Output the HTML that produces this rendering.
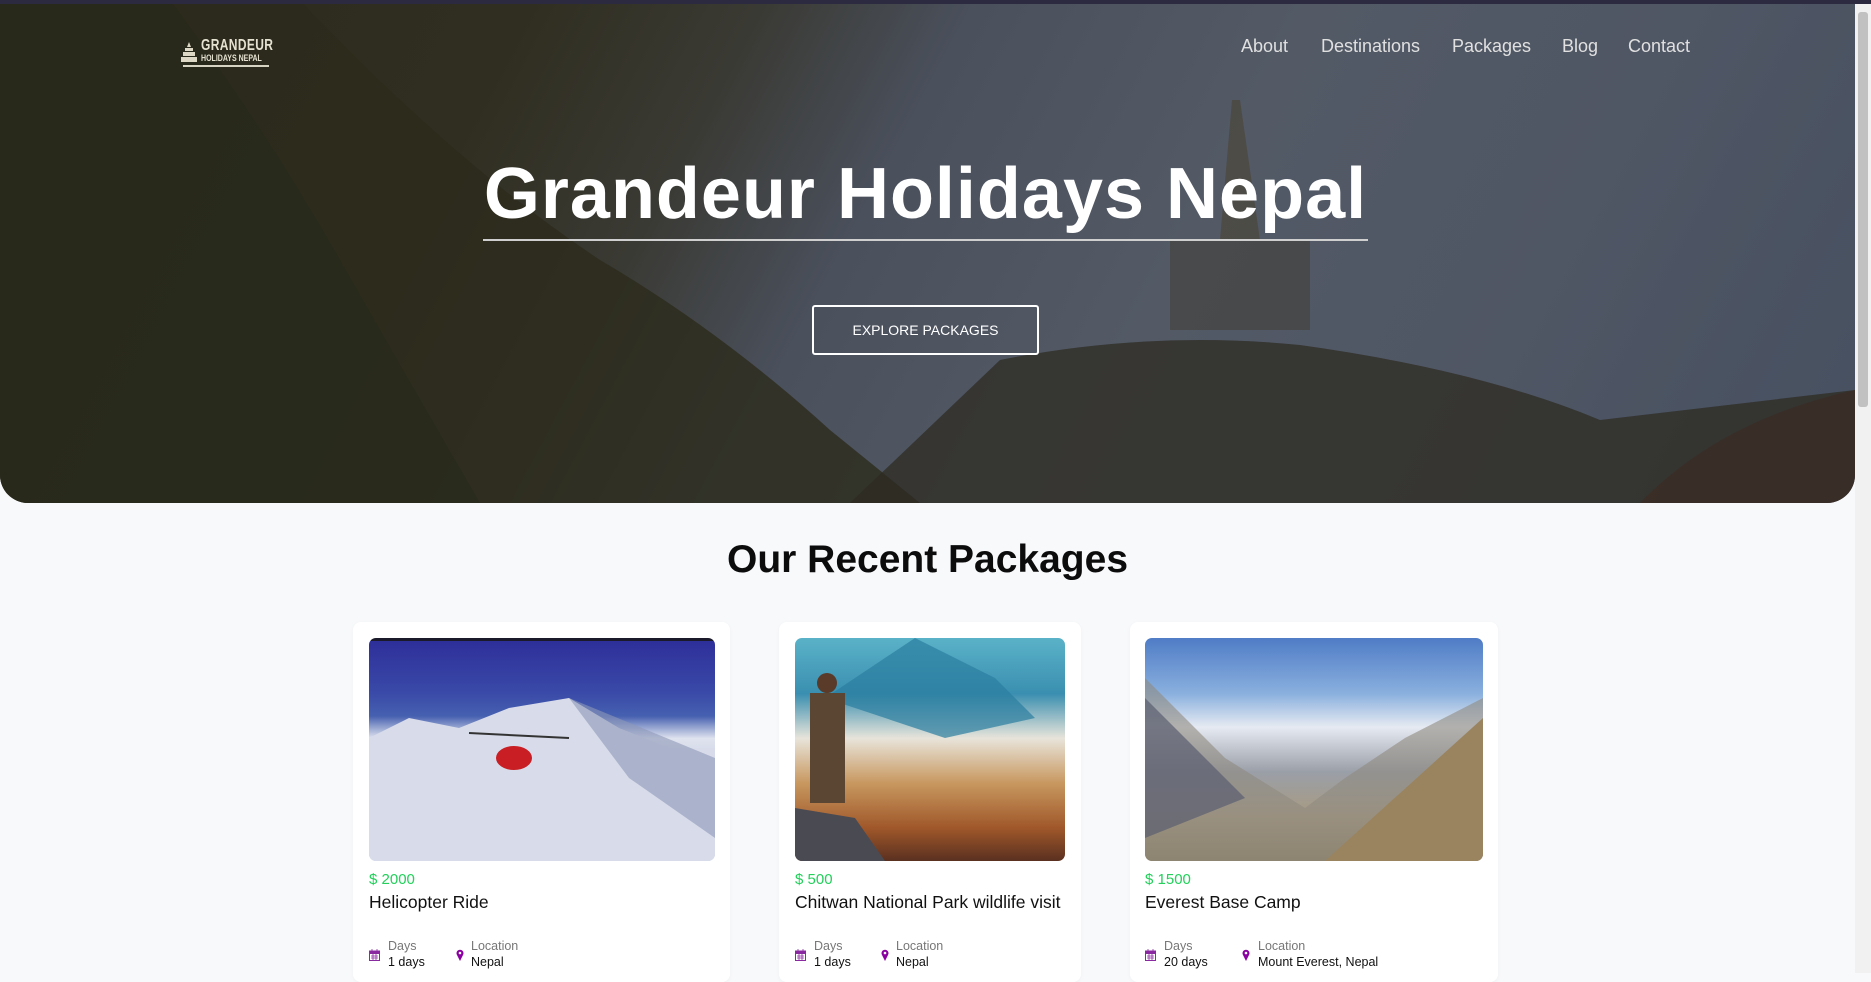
<!DOCTYPE html>
<html><head><meta charset="utf-8"><style>
*{margin:0;padding:0;box-sizing:border-box}
html,body{width:1871px;height:973px;overflow:hidden;background:#f8f9fb;font-family:"Liberation Sans",sans-serif}
.topbar{position:absolute;left:0;top:0;width:1871px;height:4px;background:#2b2a40;z-index:5}
.hero{position:absolute;left:0;top:0;width:1855px;height:503px;border-radius:0 0 28px 28px;overflow:hidden;
background:linear-gradient(118deg,#2a2a1c 0%,#302e20 25%,#3a3a34 36%,#4a505c 46%,#535a66 62%,#4f5664 80%,#465060 100%);}
.hill{position:absolute;left:0;top:0;width:1855px;height:503px}
.scroll{position:absolute;left:1855px;top:0;width:16px;height:973px;background:#f1f1f1}
.thumb{position:absolute;left:1858px;top:12px;width:10px;height:395px;background:#c1c1c1;border-radius:3px}
.logo{position:absolute;left:181px;top:37px;color:#e6e2d2;font-weight:bold}
.logo .a{position:absolute;left:20px;top:0;font-size:16px;letter-spacing:.5px;transform:scaleX(.75);transform-origin:left;white-space:nowrap}
.logo .b{position:absolute;left:20px;top:16px;font-size:9px;white-space:nowrap;transform:scaleX(.78);transform-origin:left}
.logo .l{position:absolute;left:2px;top:28px;width:86px;height:2px;background:#d8d4c4}
nav a{position:absolute;top:36px;color:#e0e0e0;font-size:18px;text-decoration:none}
h1{position:absolute;left:483px;top:153px;width:885px;text-align:center;color:#fff;font-size:72px;font-weight:bold;letter-spacing:1px;white-space:nowrap}
.ul{position:absolute;left:483px;top:239px;width:885px;height:2px;background:#cfcfcf}
.btn{position:absolute;left:812px;top:305px;width:227px;height:50px;border:2px solid #fff;border-radius:3px;color:#fff;font-size:14px;text-align:center;line-height:46px}
h2{position:absolute;left:0;width:1855px;top:538px;text-align:center;font-size:39px;font-weight:bold;color:#0c0c0c}
.card{position:absolute;top:622px;height:360px;background:#fff;border-radius:8px;box-shadow:0 1px 4px rgba(0,0,0,.04)}
.img{position:absolute;height:223px;border-radius:7px;overflow:hidden}
.price{position:absolute;top:871px;color:#22d05a;font-size:15px}
.title{position:absolute;top:892px;color:#111;font-size:17.5px;white-space:nowrap}
.m{position:absolute;top:938px;font-size:12.5px;line-height:16px;color:#777}
.m b{display:block;font-weight:normal;color:#111}
.ic{position:absolute;top:949px}
</style></head><body>
<div class="hero">
<svg class="hill" viewBox="0 0 1855 503">
<path d="M0 0 L300 0 Q450 160 600 260 Q720 330 830 430 L920 503 L0 503Z" fill="#2c2a1c" opacity=".8"/>
<path d="M0 0 L170 0 Q260 120 340 260 Q420 400 480 503 L0 503Z" fill="#26291a" opacity=".6"/>
<path d="M1000 360 Q1150 330 1300 345 Q1480 370 1600 420 L1855 390 L1855 503 L850 503Z" fill="#2e2b22" opacity=".75"/>
<path d="M1220 240 L1232 100 L1240 100 L1260 240Z" fill="#4a4232" opacity=".6"/>
<rect x="1170" y="240" width="140" height="90" fill="#3e3a30" opacity=".5"/>
<path d="M1640 503 Q1720 420 1855 390 L1855 503Z" fill="#3e2a22" opacity=".6"/>
</svg>
</div>
<div class="topbar"></div>
<div class="scroll"></div><div class="thumb"></div>
<div class="logo">
<svg style="position:absolute;left:0;top:5px" width="16" height="22" viewBox="0 0 16 22"><path d="M8 0L10 5H6Z M4 6h8v3H4Z M2 10h12v4H2Z M0 15h16v5H0Z" fill="#ddd8c6"/></svg>
<div class="a">GRANDEUR</div><div class="b">HOLIDAYS NEPAL</div><div class="l"></div></div>
<nav><a style="left:1241px">About</a><a style="left:1321px">Destinations</a><a style="left:1452px">Packages</a><a style="left:1562px">Blog</a><a style="left:1628px">Contact</a></nav>
<h1>Grandeur Holidays Nepal</h1>
<div class="ul"></div>
<div class="btn">EXPLORE PACKAGES</div>
<h2>Our Recent Packages</h2>

<div class="card" style="left:353px;width:377px"></div>
<div class="card" style="left:779px;width:302px"></div>
<div class="card" style="left:1130px;width:368px"></div>

<div class="img" style="left:369px;top:638px;width:346px;background:linear-gradient(180deg,#1a1a2a 0,#1a1a2a 3px,#2e2f9a 3px,#3a4aa8 25%,#4660b0 35%,#dfe3ef 45%,#c9d0e2 60%,#eef0f6 80%,#c5cad8 100%)">
<svg width="346" height="223"><path d="M0 100 L40 80 L90 90 L140 70 L200 60 L250 90 L300 110 L346 110 L346 223 L0 223Z" fill="#d8dcea"/><path d="M200 60 L260 140 L346 200 L346 120Z" fill="#8d98b8" opacity=".6"/><ellipse cx="145" cy="120" rx="18" ry="12" fill="#c81e24"/><path d="M100 95 L200 100" stroke="#333" stroke-width="2"/></svg></div>
<div class="img" style="left:795px;top:638px;width:270px;background:linear-gradient(180deg,#5ab2c8 0%,#3a8fb0 25%,#e8e4da 45%,#c89860 65%,#a0582a 85%,#5a3020 100%)">
<svg width="270" height="223"><path d="M30 60 L120 0 L200 40 L240 80 L150 100Z" fill="#2b7ea0" opacity=".7"/><rect x="15" y="55" width="35" height="110" fill="#5a4632"/><circle cx="32" cy="45" r="10" fill="#5a3a28"/><path d="M0 223 L0 170 L60 180 L90 223Z" fill="#4a4a52"/></svg></div>
<div class="img" style="left:1145px;top:638px;width:338px;background:linear-gradient(180deg,#4f7cc6 0%,#8ab0de 25%,#e6eaf2 40%,#9a9fa8 60%,#a89a80 80%,#8a7a5a 100%)">
<svg width="338" height="223"><path d="M0 40 L80 120 L160 170 L200 140 L260 100 L338 60 L338 223 L0 223Z" fill="#8f8a80" opacity=".6"/><path d="M338 80 L180 223 L338 223Z" fill="#9a8460"/><path d="M0 60 L100 160 L0 200Z" fill="#5a5e70" opacity=".7"/></svg></div>

<div class="price" style="left:369px">$ 2000</div><div class="title" style="left:369px">Helicopter Ride</div>
<div class="price" style="left:795px">$ 500</div><div class="title" style="left:795px">Chitwan National Park wildlife visit</div>
<div class="price" style="left:1145px">$ 1500</div><div class="title" style="left:1145px">Everest Base Camp</div>

<svg class="ic" style="left:369px" width="11" height="12" viewBox="0 0 11 12"><rect x=".5" y="2" width="10" height="9.5" fill="none" stroke="#8a2aa0"/><rect x="0" y="2" width="11" height="3" fill="#8a2aa0"/><path d="M3 0v3M8 0v3M2 7h7M2 9h7M4 5v6M7 5v6" stroke="#8a2aa0" stroke-width=".8"/></svg>
<div class="m" style="left:388px">Days<b>1 days</b></div>
<svg class="ic" style="left:456px" width="8" height="12" viewBox="0 0 8 12"><path d="M4 12L1 6A3.5 3.5 0 1 1 7 6Z" fill="#8a00a0"/><circle cx="4" cy="4" r="1.3" fill="#fff"/></svg>
<div class="m" style="left:471px">Location<b>Nepal</b></div>

<svg class="ic" style="left:795px" width="11" height="12" viewBox="0 0 11 12"><rect x=".5" y="2" width="10" height="9.5" fill="none" stroke="#8a2aa0"/><rect x="0" y="2" width="11" height="3" fill="#8a2aa0"/><path d="M3 0v3M8 0v3M2 7h7M2 9h7M4 5v6M7 5v6" stroke="#8a2aa0" stroke-width=".8"/></svg>
<div class="m" style="left:814px">Days<b>1 days</b></div>
<svg class="ic" style="left:881px" width="8" height="12" viewBox="0 0 8 12"><path d="M4 12L1 6A3.5 3.5 0 1 1 7 6Z" fill="#8a00a0"/><circle cx="4" cy="4" r="1.3" fill="#fff"/></svg>
<div class="m" style="left:896px">Location<b>Nepal</b></div>

<svg class="ic" style="left:1145px" width="11" height="12" viewBox="0 0 11 12"><rect x=".5" y="2" width="10" height="9.5" fill="none" stroke="#8a2aa0"/><rect x="0" y="2" width="11" height="3" fill="#8a2aa0"/><path d="M3 0v3M8 0v3M2 7h7M2 9h7M4 5v6M7 5v6" stroke="#8a2aa0" stroke-width=".8"/></svg>
<div class="m" style="left:1164px">Days<b>20 days</b></div>
<svg class="ic" style="left:1242px" width="8" height="12" viewBox="0 0 8 12"><path d="M4 12L1 6A3.5 3.5 0 1 1 7 6Z" fill="#8a00a0"/><circle cx="4" cy="4" r="1.3" fill="#fff"/></svg>
<div class="m" style="left:1258px">Location<b>Mount Everest, Nepal</b></div>
</body></html>
